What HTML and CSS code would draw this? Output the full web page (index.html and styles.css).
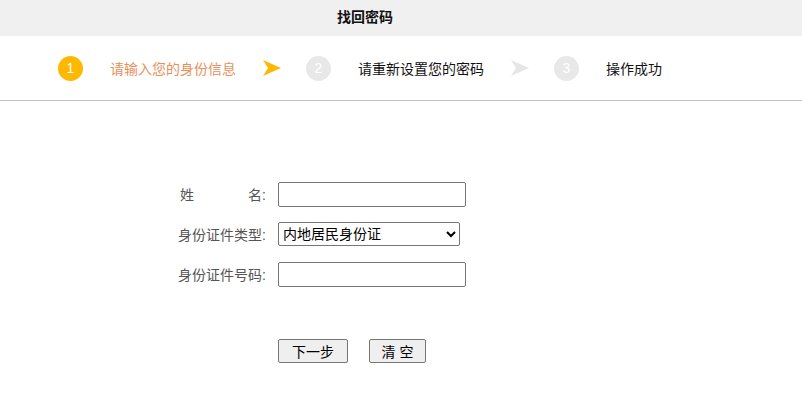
FILE: index.html
```html
<!DOCTYPE html>
<html lang="zh-CN">

<head>
    <meta charset="UTF-8">
    <title>找回密码</title>
    <link rel="stylesheet" href="styles.css">
</head>

<body>
    <div class="page-title">找回密码</div>

    <!-- step indicator -->
    <div class="steps">
        <div class="step active">
            <span class="step-num">1</span>
            <span class="step-text">请输入您的身份信息</span>
            <svg class="step-arrow" width="18" height="16" viewBox="0 0 18 16">
                <polygon points="0,0 18,8 0,16 5,8" fill="#ffb800" />
            </svg>
        </div>
        <div class="step">
            <span class="step-num">2</span>
            <span class="step-text">请重新设置您的密码</span>
            <svg class="step-arrow" width="18" height="16" viewBox="0 0 18 16">
                <polygon points="0,0 18,8 0,16 5,8" fill="#e6e6e6" />
            </svg>
        </div>
        <div class="step">
            <span class="step-num">3</span>
            <span class="step-text">操作成功</span>
        </div>
    </div>

    <form class="find-form" onsubmit="return false;">
        <div class="form-row">
            <label class="form-label"><span class="label-name">姓名</span>:</label>
            <input type="text" class="form-input">
        </div>
        <div class="form-row">
            <label class="form-label">身份证件类型:</label>
            <select class="form-select">
                <option>内地居民身份证</option>
                <option>港澳居民来往内地通行证</option>
                <option>台湾居民来往大陆通行证</option>
                <option>护照</option>
            </select>
        </div>
        <div class="form-row">
            <label class="form-label">身份证件号码:</label>
            <input type="text" class="form-input">
        </div>
        <div class="form-buttons">
            <button type="submit" class="btn btn-next">下一步</button>
            <button type="reset" class="btn btn-clear">清 空</button>
        </div>
    </form>
</body>

</html>
```

FILE: styles.css
```css
body {
    margin: 0;
    font-family: "Liberation Sans", "Noto Sans CJK SC", sans-serif;
    font-size: 13px;
    color: #333;
    background: #fff;
}

.page-title {
    height: 36px;
    line-height: 34px;
    background-color: #f0f0f0;
    font-size: 14px;
    font-weight: bold;
    color: #111;
    padding-left: 337px;
}

.steps {
    display: flex;
    align-items: center;
    height: 64px;
    padding-left: 58px;
    border-bottom: 1px solid #c2c2c2;
}

.step {
    display: flex;
    align-items: center;
    width: 248px;
}

.step-num {
    width: 25px;
    height: 25px;
    border-radius: 50%;
    background-color: #e8e8e8;
    color: #fff;
    font-size: 14px;
    line-height: 25px;
    text-align: center;
}

.step-text {
    margin-left: 27px;
    width: 153px;
    font-size: 14px;
    color: #111;
}

.step.active .step-num {
    background-color: #ffb800;
}

.step.active .step-text {
    color: #e9905c;
}

.step-arrow {
    display: block;
}

.find-form {
    padding-top: 81px;
}

.form-row {
    display: flex;
    align-items: center;
    height: 24px;
    margin-bottom: 16px;
}

.form-label {
    width: 278px;
    text-align: right;
    padding-right: 12px;
    box-sizing: border-box;
    color: #555;
    font-size: 14px;
}

.label-name {
    display: inline-block;
    width: 82px;
    text-align: justify;
    text-align-last: justify;
}

.form-input {
    width: 188px;
    height: 25px;
    box-sizing: border-box;
    border: 1px solid #767676;
    border-radius: 2px;
    padding: 0 4px;
    margin: 0;
    font-size: 14px;
}

.form-select {
    width: 182px;
    height: 24px;
    box-sizing: border-box;
    border: 1px solid #767676;
    border-radius: 2px;
    margin: 0;
    font-family: "Liberation Sans", "Noto Sans CJK SC", sans-serif;
    font-size: 14px;
    color: #000;
    background: #fff;
}

.form-buttons {
    display: flex;
    gap: 21px;
    padding-left: 278px;
    margin-top: 53px;
}

.btn {
    height: 24px;
    margin: 0;
    padding: 0;
    border: 1px solid #767676;
    border-radius: 2px;
    background-color: #efefef;
    font-family: "Liberation Sans", "Noto Sans CJK SC", sans-serif;
    font-size: 14px;
    color: #000;
}

.btn-next {
    width: 70px;
}

.btn-clear {
    width: 57px;
}
```
